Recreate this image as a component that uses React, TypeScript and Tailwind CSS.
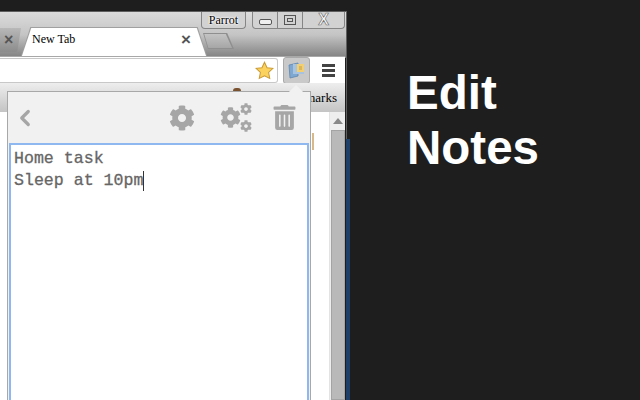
import { ChevronLeft } from "lucide-react";
import { FaCog, FaTrashAlt } from "react-icons/fa";

const WindowButtons = () => (
  <div className="flex h-[17px] items-start gap-[6px]">
    <div className="flex h-[17px] w-[45px] items-center justify-center rounded-b-[4px] border border-t-0 border-[#858585] bg-[#d2d2d2] text-[12px] leading-none text-black [font-family:'Liberation_Serif',serif] [text-shadow:0_0_2px_#fff,0_0_2px_#fff,0_0_2px_#fff]">
      Parrot
    </div>
    <div className="flex h-[17px] w-[93px] rounded-b-[4px] border border-t-0 border-[#858585] bg-[#d2d2d2]">
      <div className="flex w-[25px] items-end justify-center border-r border-[#858585] pb-[3px]">
        <div className="h-[6px] w-[13px] rounded-[2px] border border-[#555] bg-[#eee]" />
      </div>
      <div className="flex w-[25px] items-center justify-center border-r border-[#858585]">
        <div className="flex h-[10px] w-[12px] items-center justify-center border border-[#555]">
          <div className="h-[4px] w-[6px] border border-[#555]" />
        </div>
      </div>
      <div className="flex-1 text-center text-[16px] leading-[16px] font-bold text-white [font-family:'Liberation_Sans',sans-serif] [-webkit-text-stroke:0.7px_#777]">
        X
      </div>
    </div>
  </div>
);

const Tabs = () => (
  <div className="relative h-[29px]">
    <div className="absolute top-[1px] left-0 flex h-[24px] w-[21px] items-center rounded-br-[6px] bg-gradient-to-b from-[#b8b8b8] to-[#8c8c8c] pl-[4px] text-[16px] leading-none font-bold text-[#555] [clip-path:polygon(0_0,100%_0,82%_100%,0_100%)] [font-family:'Liberation_Sans',sans-serif]">
      ×
    </div>
    <div className="absolute top-[6px] left-[203px] h-[16px] w-[31px] bg-[#8f8f8f] [clip-path:polygon(0_0,78%_0,100%_100%,16%_100%)]">
      <div className="h-[15px] w-[30px] bg-gradient-to-b from-[#c6c6c6] to-[#a6a6a6] [clip-path:polygon(4%_6%,76%_6%,97%_100%,18%_100%)]" />
    </div>
    <div className="absolute top-0 left-[21px] h-[29px] w-[186px] bg-[#a0a0a0] [clip-path:polygon(0_100%,5%_0,95%_0,100%_100%)]">
      <div className="mt-px flex h-[28px] items-center justify-between bg-white pr-[16px] pb-[6px] pl-[11px] [clip-path:polygon(0.500%_100%,5.500%_0,94.500%_0,99.500%_100%)]">
        <span className="text-[12px] text-black [font-family:'Liberation_Serif',serif]">New Tab</span>
        <span className="text-[17px] leading-none font-bold text-[#555] [font-family:'Liberation_Sans',sans-serif]">×</span>
      </div>
    </div>
  </div>
);

const Toolbar = () => (
  <div className="flex h-[27px] items-center border-t border-[#a8a8a8] bg-white pr-[10px]">
    <div className="h-[25px] flex-1 rounded-r-[3px] border border-l-0 border-[#c8c8c8] bg-white">
      <div className="flex h-full items-center justify-end pr-[3px]">
        <svg width="19" height="19" viewBox="0 0 24 24">
          <path
            d="M12 1.500l3.200 6.900 7.500.9-5.500 5.200 1.400 7.500L12 18.600l-6.600 3.400 1.400-7.500L1.300 9.300l7.500-.9z"
            fill="#fbd25d"
            stroke="#c99a35"
            strokeWidth="1.300"
          />
        </svg>
      </div>
    </div>
    <div className="ml-[5px] flex h-[27px] w-[27px] items-center justify-center rounded-[3px] border border-[#a9a9a9] bg-[#c9c9c9]">
      <svg width="18" height="18" viewBox="0 0 18 18">
        <path d="M1 4l9-2v13l-8 2z" fill="#7ea7d2" stroke="#5f86ad" strokeWidth="0.800" />
        <path d="M5 3h11v10H5z" fill="#a7c3df" />
        <path d="M9 3h7v8H9z" fill="#f2cf72" />
        <path d="M11 6h3M11 8h3" stroke="#b9933a" strokeWidth="0.800" />
      </svg>
    </div>
    <div className="ml-[12px] flex w-[13px] flex-col gap-[2px]">
      <div className="h-[3px] bg-[#444]" />
      <div className="h-[3px] bg-[#444]" />
      <div className="h-[3px] bg-[#444]" />
    </div>
  </div>
);

const Popup = () => (
  <div className="absolute top-[91px] left-[7px] flex h-[309px] w-[304px] flex-col border-t border-r border-l border-[#a8a8a8] bg-[#f1f1f1] px-[1px]">
    <div className="absolute -top-[5px] left-[283px] h-[10px] w-[10px] rotate-45 bg-[#f1f1f1]" />
    <div className="relative flex h-[51px] items-center pr-[12px] pl-[3px] text-[#a6a6a6]">
      <ChevronLeft size={26} strokeWidth={3} />
      <div className="ml-auto flex items-center">
        <FaCog size={26} />
        <div className="ml-[25px] flex items-center">
          <FaCog size={21} />
          <div className="-ml-[1px] flex flex-col gap-[5px]">
            <FaCog size={12} />
            <FaCog size={12} />
          </div>
        </div>
        <FaTrashAlt size={25} className="ml-[20px]" />
      </div>
    </div>
    <div className="flex-1 border-2 border-b-0 border-[#8fb8f0] bg-white px-[3px] pt-[3px] text-[16.600px] leading-[22px] text-[#666] [font-family:'Liberation_Mono',monospace] [-webkit-text-stroke:0.3px_#666]">
      <div>Home task</div>
      <div className="flex items-center">
        Sleep at 10pm
        <span className="h-[20px] w-px bg-[#333]" />
      </div>
    </div>
  </div>
);

const Browser = () => (
  <div className="relative flex h-[400px] w-[350px] shrink-0 flex-col pt-[11px]">
    <div className="flex h-[389px] w-[347px] flex-col border-t border-r border-[#5f5f5f] bg-gradient-to-b from-[#dcdcdc] via-[#c4c4c4] to-[#808080] bg-[length:100%_46px] bg-no-repeat pr-[1px]">
      <div className="flex h-[15px] justify-end">
        <WindowButtons />
      </div>
      <Tabs />
      <Toolbar />
      <div className="flex h-[29px] items-center justify-end bg-gradient-to-b from-[#eeeeee] to-[#c4c4c4] pr-[8px] text-[13px] text-black [font-family:'Liberation_Serif',serif]">
        marks
      </div>
      <div className="flex flex-1 justify-end bg-white">
        <div className="flex w-[16px] flex-col items-center border-l border-[#e3e3e3] bg-[#eeeeee]">
          <div className="mt-[6px] h-0 w-0 border-x-[5px] border-b-[6px] border-x-transparent border-b-[#888]" />
          <div className="mt-[6px] w-[14px] flex-1 border border-[#a4a4a4] bg-[#b9b9b9]" />
        </div>
      </div>
    </div>
    <div className="absolute top-[139px] right-0 h-[261px] w-[4px] bg-[#1f4068]" />
    <div className="absolute top-[88px] left-[233px] h-[3px] w-[8px] rounded-t-full bg-[#7a5230]" />
    <div className="absolute top-[133px] left-[312px] h-[17px] w-[2px] bg-[#d8b98c]" />
    <Popup />
  </div>
);

export default function App() {
  return (
    <div className="flex h-[400px] w-[640px] overflow-hidden bg-[#1e1e1e]">
      <Browser />
      <div className="pt-[65px] pl-[57px] text-[47.500px] leading-[55px] font-bold text-white [font-family:'Liberation_Sans',sans-serif]">
        <div>Edit</div>
        <div>Notes</div>
      </div>
    </div>
  );
}
